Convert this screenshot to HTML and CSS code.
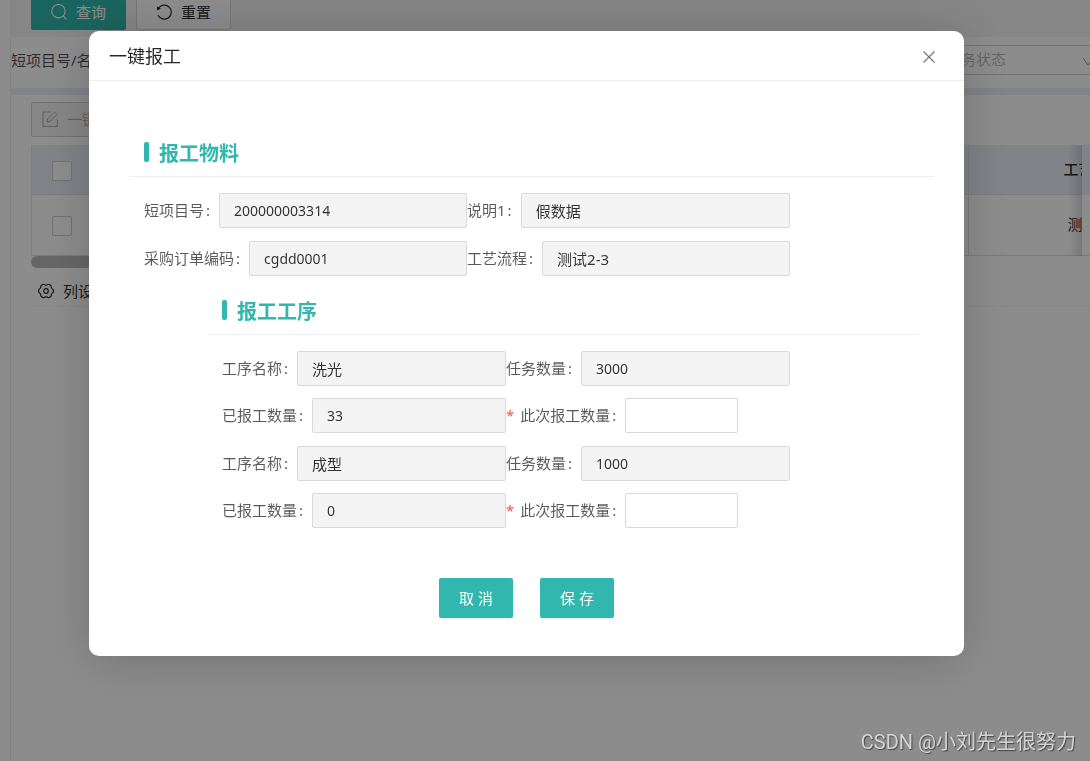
FILE: index.html
```html
<!DOCTYPE html>
<html lang="zh-CN">
<head>
<meta charset="utf-8">
<meta name="viewport" content="width=device-width, initial-scale=1">
<title>一键报工</title>
<link rel="stylesheet" href="styles.css">
</head>
<body>
<main class="page">
  <div class="toolbar">
    <button class="btn btn-primary" type="button">
      <svg class="icon" viewBox="0 0 16 16" fill="none" stroke="currentColor" stroke-width="1.100" aria-hidden="true"><circle cx="7.400" cy="7.200" r="6.700"/><path d="M12.200 12l3.200 3.400"/></svg>
      查询
    </button>
    <button class="btn" type="button">
      <svg class="icon" viewBox="0 0 16 16" fill="none" stroke="currentColor" stroke-width="1.200" aria-hidden="true"><path d="M2.300 4.500A7 7 0 1 1 2 11.200"/><path d="M.8 2.200l.2 4 3.800-1.400z" fill="currentColor" stroke="none"/></svg>
      重置
    </button>
  </div>
  <div class="filters">
    <label for="project">短项目号/名称：</label>
    <input id="project" class="filter-input" type="text">
    <div class="filter-select">
      <select aria-label="任务状态"><option>任务状态</option></select>
      <svg class="chevron" viewBox="0 0 12 12" fill="none" stroke="currentColor" aria-hidden="true"><path d="M1 2l5 7 5-7"/></svg>
    </div>
  </div>
  <section class="panel">
    <button class="btn btn-disabled" type="button" disabled>
      <svg class="icon" viewBox="0 0 16 16" fill="none" stroke="currentColor" aria-hidden="true"><path d="M8.500 1H1v14.400h14.400V8.500M5 11l.5-3L12.600 1l2.400 2.400L8 10.500z"/></svg>
      一键报工
    </button>
    <div class="table-box">
      <div class="table-scroll">
        <table class="table">
          <thead><tr><th class="col-check"><input type="checkbox" aria-label="全选"></th><th></th><th class="col-flow">工艺流程</th></tr></thead>
          <tbody><tr><td class="col-check"><input type="checkbox" aria-label="选择此行"></td><td></td><td class="col-flow">测试2-3</td></tr></tbody>
        </table>
      </div>
      <div class="table-fixed"></div>
    </div>
    <div class="scrollbar"></div>
    <button class="columns" type="button">
      <svg class="icon" viewBox="0 0 16 16" fill="none" stroke="currentColor" stroke-width="1.200" aria-hidden="true"><path d="M5.200 1.300Q8 2.800 10.800 1.300L12.900 2.600Q12.900 5.400 15.300 6.800V9.200Q12.900 10.600 12.900 13.400L10.800 14.700Q8 13.200 5.200 14.700L3.100 13.400Q3.100 10.600.7 9.200V6.800Q3.100 5.400 3.100 2.600Z" stroke-linejoin="round"/><circle cx="8" cy="8" r="2.300"/></svg>
      列设置
    </button>
  </section>
</main>

<div class="mask">
  <div class="modal" role="dialog" aria-modal="true" aria-labelledby="modal-title">
    <header class="modal-head">
      <h1 id="modal-title">一键报工</h1>
      <button class="close" type="button" aria-label="关闭">
        <svg viewBox="0 0 12 12" fill="none" stroke="currentColor" stroke-width="1.200" aria-hidden="true"><path d="M.5.5l11 11M11.500.5l-11 11"/></svg>
      </button>
    </header>
    <form class="modal-body">
      <section class="block block-material">
        <h2>报工物料</h2>
        <div class="grid">
          <div class="field"><label for="m1">短项目号<i>:</i></label><input class="num" id="m1" value="200000003314" disabled></div>
          <div class="field"><label for="m2">说明1<i>:</i></label><input id="m2" value="假数据" disabled></div>
          <div class="field"><label for="m3">采购订单编码<i>:</i></label><input class="num" id="m3" value="cgdd0001" disabled></div>
          <div class="field"><label for="m4">工艺流程<i>:</i></label><input id="m4" value="测试2-3" disabled></div>
        </div>
      </section>
      <section class="block block-process">
        <h2>报工工序</h2>
        <div class="grid">
          <div class="field"><label for="p1">工序名称<i>:</i></label><input id="p1" value="洗光" disabled></div>
          <div class="field"><label for="p2">任务数量<i>:</i></label><input class="num" id="p2" value="3000" disabled></div>
          <div class="field"><label for="p3">已报工数量<i>:</i></label><input class="num" id="p3" value="33" disabled></div>
          <div class="field field-short"><label for="p4"><b>*</b>此次报工数量<i>:</i></label><input class="num" id="p4" required></div>
        </div>
        <div class="grid">
          <div class="field"><label for="q1">工序名称<i>:</i></label><input id="q1" value="成型" disabled></div>
          <div class="field"><label for="q2">任务数量<i>:</i></label><input class="num" id="q2" value="1000" disabled></div>
          <div class="field"><label for="q3">已报工数量<i>:</i></label><input class="num" id="q3" value="0" disabled></div>
          <div class="field field-short"><label for="q4"><b>*</b>此次报工数量<i>:</i></label><input class="num" id="q4" required></div>
        </div>
      </section>
      <div class="actions">
        <button type="button">取 消</button>
        <button type="button">保 存</button>
      </div>
    </form>
  </div>
</div>
<div class="watermark">CSDN @小刘先生很努力</div>
</body>
</html>
```
FILE: styles.css
```css
* { box-sizing: border-box; }
body {
  margin: 0;
  overflow: hidden;
  background: #fff;
  color: rgba(0, 0, 0, .85);
  font: 15px/20px "Noto Sans", "Noto Sans CJK SC", sans-serif;
}
button, input, select { font: inherit; color: inherit; }
h1, h2 { margin: 0; }

.page {
  min-height: 100vh;
  margin-left: 10px;
  border-left: 1px solid #eee;
}
.toolbar {
  display: flex;
  gap: 10px;
  height: 37px;
  padding: 0 20px 7px;
  align-items: flex-end;
  background: #f4f4f4;
}
.btn {
  display: flex;
  align-items: center;
  gap: 9px;
  height: 35px;
  padding: 0 19px 2px;
  flex: none;
  border: 1px solid #d9d9d9;
  border-radius: 2px;
  background: #fff;
  white-space: nowrap;
}
.icon { width: 16px; height: 16px; flex: none; }
.btn-primary { border-color: #31b7ad; background: #31b7ad; color: #fff; }
.btn-disabled {
  padding: 0 10px 2px;
  border-color: #d0d0d0;
  background: #f4f4f4;
  color: rgba(0, 0, 0, .3);
}
.filters {
  display: flex;
  align-items: center;
  height: 51px;
  padding-bottom: 6px;
  color: rgba(0, 0, 0, .7);
}
.filters label { flex: none; }
.filter-input {
  flex: 1;
  min-width: 0;
  height: 30px;
  margin-right: 90px;
  border: 1px solid #d9d9d9;
}
.filter-select {
  position: relative;
  flex: none;
  width: 170px;
  margin-right: -11px;
}
.filter-select select {
  display: block;
  width: 100%;
  height: 30px;
  padding: 0 14px 2px;
  appearance: none;
  border: 1px solid #d0d0d0;
  border-radius: 2px;
  background: #fff;
  color: rgba(0, 0, 0, .3);
}
.chevron {
  position: absolute;
  right: 7px;
  top: 11px;
  width: 12px;
  height: 12px;
  color: rgba(0, 0, 0, .4);
}
.panel {
  padding: 7px 0 0 20px;
  border-top: 7px solid #ebeef7;
}
.table-box { display: flex; margin-top: 8px; }
.table-scroll {
  position: relative;
  flex: 1;
  min-width: 0;
  overflow: hidden;
}
.table-scroll::after {
  content: "";
  position: absolute;
  inset: 0 0 0 auto;
  width: 14px;
  background: linear-gradient(to right, transparent, rgba(0, 0, 0, .14));
}
.table {
  width: calc(100% + 136px);
  table-layout: fixed;
  border-collapse: separate;
  border-spacing: 0;
  border-left: 1px solid #e4e4e4;
}
.table th, .table td {
  padding: 0 0 2px;
  border-bottom: 1px solid #e0e0e0;
  text-align: center;
  font-weight: 500;
}
.table th { height: 50px; background: #ebeef7; }
.table td { height: 61px; font-weight: 400; }
.table .col-check { width: 60px; padding: 2px 0 0; }
.table .col-flow { width: 250px; border-left: 1px solid #ddd; }
.table input {
  display: block;
  width: 20px;
  height: 20px;
  margin: 0 auto;
  appearance: none;
  border: 1px solid #d0d0d0;
  border-radius: 2px;
  background: #fff;
}
.table-fixed {
  width: 8px;
  border-bottom: 1px solid #e0e0e0;
  background: linear-gradient(#ebeef7 50px, #fff 50px);
}
.scrollbar {
  width: 75%;
  height: 12px;
  border-radius: 6px;
  background: #bbb;
}
.columns {
  display: flex;
  align-items: center;
  gap: 9px;
  width: 100%;
  height: 39px;
  padding: 7px 7px 0;
  border: 0;
  border-bottom: 1px solid #f8f8f8;
  background: none;
}

.mask {
  position: fixed;
  inset: 0;
  display: flex;
  align-items: flex-start;
  padding: 31px 126px 31px 89px;
  background: rgba(0, 0, 0, .45);
}
.modal {
  flex: 1;
  border-radius: 10px;
  background: #fff;
  box-shadow: 0 4px 50px rgba(0, 0, 0, .2);
}
.modal-head {
  display: flex;
  align-items: center;
  justify-content: space-between;
  padding: 13px 29px 11px 20px;
  border-bottom: 1px solid #eee;
}
.modal-head h1 {
  font-size: 18px;
  line-height: 25px;
  font-weight: 400;
}
.close {
  display: flex;
  padding: 0;
  border: 0;
  background: none;
  color: #777;
}
.close svg { width: 12px; height: 12px; }
.modal-body { padding: 61px 0 38px; }

.block h2 {
  display: flex;
  align-items: flex-start;
  gap: 10px;
  height: 35px;
  padding: 0 15px;
  border-bottom: 1px solid #eee;
  margin-bottom: 16px;
  color: #31b7ad;
  font-size: 20px;
  line-height: 24px;
}
.block h2::before {
  content: "";
  width: 5px;
  height: 20px;
  border-radius: 2px;
  background: #31b7ad;
}
.block-material { margin: 0 30px 24px 40px; }
.block-process { margin: 0 45px 50px 119px; }
.grid {
  display: grid;
  grid-template-columns: 1fr 1fr;
  gap: 12px 0;
}
.block-material .grid { row-gap: 13px; padding: 0 144px 0 15px; }
.block-process h2 { padding-left: 14px; }
.block-process .grid { padding: 0 129px 0 14px; }
.grid + .grid { margin-top: 13px; }
.field { display: flex; align-items: center; min-width: 0; }
.field label { flex: none; padding-bottom: 2px; color: rgba(0, 0, 0, .65); }
.field i { margin: 0 9px 0 2px; font-style: normal; }
.field b { margin-right: 6px; color: #ff4d4f; font-weight: 400; }
.field input {
  flex: 1;
  min-width: 0;
  height: 35px;
  padding: 0 14px;
  border: 1px solid #d9d9d9;
  border-radius: 2px;
  background: #fff;
  color: rgba(0, 0, 0, .8);
}
.field input:disabled { background: #f4f4f4; }
.field .num { font-size: 14px; }
.field-short { padding-right: 52px; }

.actions { display: flex; justify-content: center; gap: 27px; }
.actions button {
  width: 74px;
  height: 40px;
  padding: 0;
  border: 0;
  border-radius: 2px;
  background: #31b7ad;
  box-shadow: 0 2px 2px rgba(0, 0, 0, .05);
  color: #fff;
}
.watermark {
  position: fixed;
  right: 14px;
  bottom: 4px;
  color: #d4d4d4;
  font: 20px/30px "Liberation Sans Narrow", Roboto, "Noto Sans CJK SC", sans-serif;
  text-shadow: 1px 1px 1px rgba(0, 0, 0, .5);
}
```
